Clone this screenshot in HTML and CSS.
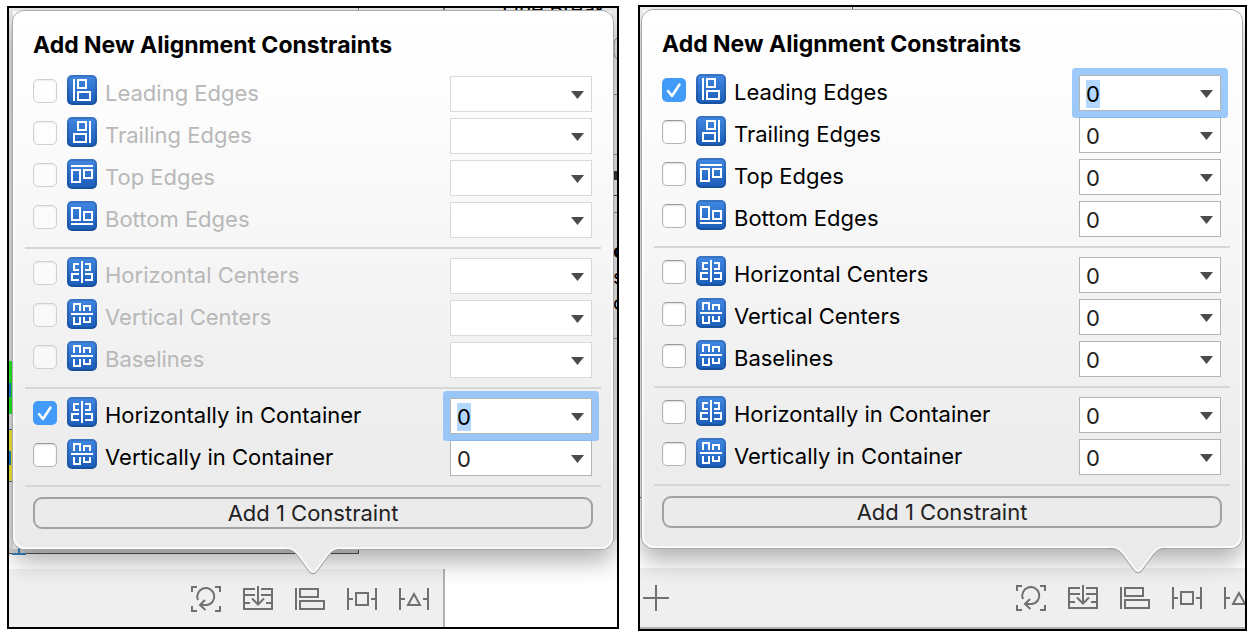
FILE: index.html
```html
<!DOCTYPE html>
<html lang="en">
<head>
<meta charset="utf-8">
<title>Add New Alignment Constraints</title>
<link rel="stylesheet" href="styles.css">
</head>
<body>
<svg class="defs" aria-hidden="true">
  <defs>
    <linearGradient id="blue" x1="0" y1="0" x2="0" y2="1"><stop offset="0" stop-color="#3f86e0"/><stop offset="1" stop-color="#1c5fba"/></linearGradient>
    <linearGradient id="rim" x1="0" y1="0" x2="0" y2="1"><stop offset="0" stop-color="#3a74c4"/><stop offset="1" stop-color="#174f9f"/></linearGradient>
    <symbol id="tile" viewBox="0 0 30 30"><rect width="30" height="30" rx="5" fill="url(#rim)"/><rect x="2" y="2" width="26" height="26" rx="3" fill="url(#blue)"/></symbol>
    <symbol id="leading" viewBox="0 0 30 30"><use href="#tile"/><path d="M7 4V26M11 5h8v8h-8zM11 17h12v8h-12z"/></symbol>
    <symbol id="trailing" viewBox="0 0 30 30"><use href="#tile"/><path d="M23 4V26M11 5h8v8h-8zM7 17h12v8h-12z"/></symbol>
    <symbol id="top" viewBox="0 0 30 30"><use href="#tile"/><path d="M4 7H26M5 11h8v12h-8zM17 11h8v8h-8z"/></symbol>
    <symbol id="bottom" viewBox="0 0 30 30"><use href="#tile"/><path d="M4 23H26M5 7h8v12h-8zM17 11h8v8h-8z"/></symbol>
    <symbol id="hcenter" viewBox="0 0 30 30"><use href="#tile"/><path d="M15 4V26M12 7H7V13H12M12 17H5V23H12M18 7H23V13H18M18 17H25V23H18"/></symbol>
    <symbol id="vcenter" viewBox="0 0 30 30"><use href="#tile"/><path d="M4 15H26M7 12V5H13V12M17 12V7H23V12M7 18V25H13V18M17 18V23H23V18"/></symbol>
    <symbol id="t-update" viewBox="0 0 30 26"><path d="M1 6V1H6M24 1H29V6M29 20V25H24M6 25H1V20M7 14A8.500 8.500 0 1 1 16 19H10M14 14L9 19L14.500 24"/></symbol>
    <symbol id="t-embed" viewBox="0 0 30 26"><path d="M12 3H1V23H29V3H18M1 9H12M18 9H29M1 17H7M23 17H29M15 0V18M9 12.500L15 18.500L21 12.500"/></symbol>
    <symbol id="t-align" viewBox="0 0 30 26"><path d="M1 2V24M5 3H23V11H5zM5 15H29V23H5z"/></symbol>
    <symbol id="t-pin" viewBox="0 0 30 26"><path d="M1 2V24M29 2V24M2 13H6M24 13H28M9 7H21V19H9z"/></symbol>
    <symbol id="t-resolve" viewBox="0 0 30 26"><path d="M1 2V24M29 2V24M2 13H6M24 13H28M15 8L9 19H21z"/></symbol>
    <symbol id="t-plus" viewBox="0 0 26 26"><path d="M13 0V26M0 13H26"/></symbol>
    <symbol id="tail" viewBox="0 0 56 30"><path class="tail-fill" d="M0 0V3C6 3 9 5 12 9L24 25Q28 30 32 25L44 9C47 5 50 3 56 3V0z"/><path class="tail-light" d="M0 2C7 2 10 4 13 8L25 24Q28 28 31 24L43 8C46 4 49 2 56 2"/><path class="tail-edge" d="M0 3.500C6 3.500 9 5 12 9L24 25.500Q28 30 32 25.500L44 9C47 5 50 3.500 56 3.500"/></symbol>
  </defs>
</svg>
<main class="screens">
  <section class="frame frame-left">
    <svg class="backdrop backdrop-start" width="440" height="619" aria-hidden="true">
      <path fill="#e4e4e4" d="M0 3H4V547H0z"/>
      <path fill="#e9e9e9" d="M0 0H440V3H0z"/>
      <path fill="#777" d="M349 0h1v3h-1zM434 0h2v3h-2z"/>
      <path fill="#28f028" d="M0 353H5V406H0z"/><path fill="#1b84d0" d="M0 375H2V389H0z"/>
      <path fill="#f5ec35" d="M0 422H5V474H0z"/><path fill="#4d67a3" d="M0 421h5v1H0zM0 473h5v1H0z"/><path fill="#1b84d0" d="M0 443h2v14H0z"/>
      <path fill="#d6d6d6" d="M0 541H350V546H0z"/>
      <path fill="#555" d="M0 546H350V541H349V545H0z"/>
      <path fill="#3c83bd" d="M9 540h2v5H9zM3 545h14v2H3z"/>
    </svg>
    <svg class="backdrop backdrop-end" width="172" height="619" aria-hidden="true">
      <path fill="#ececec" d="M166 3h6v530h-6z"/>
      <path fill="#e9e9e9" d="M0 0h172v3H0z"/>
      <text class="heading" x="57" y="8">Line Break</text>
      <path fill="#888" d="M168 86h4v1h-4zM168 146h4v1h-4zM168 204h4v1h-4zM168 330h4v1h-4z"/>
      <path fill="#333" d="M168 163h4v2h-4zM169 165h3v7h-3zM168 187h4v1h-4z"/>
      <path fill="none" stroke="#888" d="M172 30q-3 2-3 6v9q0 4 3 6"/>
      <text class="strong" x="168" y="250">o</text><text x="168" y="276">s</text><text x="168" y="302">c</text>
    </svg>
    <form class="popover popover-left">
      <h2>Add New Alignment Constraints</h2>
      <fieldset class="group">
        <div class="row off"><input type="checkbox" id="a1" disabled><svg class="glyph"><use href="#leading"/></svg><label for="a1">Leading Edges</label><span class="combo"><input type="text" aria-label="Leading Edges value" disabled><button type="button" aria-label="Show values" disabled></button></span></div>
        <div class="row off"><input type="checkbox" id="a2" disabled><svg class="glyph"><use href="#trailing"/></svg><label for="a2">Trailing Edges</label><span class="combo"><input type="text" aria-label="Trailing Edges value" disabled><button type="button" aria-label="Show values" disabled></button></span></div>
        <div class="row off"><input type="checkbox" id="a3" disabled><svg class="glyph"><use href="#top"/></svg><label for="a3">Top Edges</label><span class="combo"><input type="text" aria-label="Top Edges value" disabled><button type="button" aria-label="Show values" disabled></button></span></div>
        <div class="row off"><input type="checkbox" id="a4" disabled><svg class="glyph"><use href="#bottom"/></svg><label for="a4">Bottom Edges</label><span class="combo"><input type="text" aria-label="Bottom Edges value" disabled><button type="button" aria-label="Show values" disabled></button></span></div>
      </fieldset>
      <fieldset class="group">
        <div class="row off"><input type="checkbox" id="a5" disabled><svg class="glyph"><use href="#hcenter"/></svg><label for="a5">Horizontal Centers</label><span class="combo"><input type="text" aria-label="Horizontal Centers value" disabled><button type="button" aria-label="Show values" disabled></button></span></div>
        <div class="row off"><input type="checkbox" id="a6" disabled><svg class="glyph"><use href="#vcenter"/></svg><label for="a6">Vertical Centers</label><span class="combo"><input type="text" aria-label="Vertical Centers value" disabled><button type="button" aria-label="Show values" disabled></button></span></div>
        <div class="row off"><input type="checkbox" id="a7" disabled><svg class="glyph"><use href="#vcenter"/></svg><label for="a7">Baselines</label><span class="combo"><input type="text" aria-label="Baselines value" disabled><button type="button" aria-label="Show values" disabled></button></span></div>
      </fieldset>
      <fieldset class="group">
        <div class="row"><input type="checkbox" id="a8" checked><svg class="glyph"><use href="#hcenter"/></svg><label for="a8">Horizontally in Container</label><span class="combo active"><input type="text" aria-label="Horizontally in Container value" value="0"><button type="button" aria-label="Show values"></button></span></div>
        <div class="row"><input type="checkbox" id="a9"><svg class="glyph"><use href="#vcenter"/></svg><label for="a9">Vertically in Container</label><span class="combo"><input type="text" aria-label="Vertically in Container value" value="0"><button type="button" aria-label="Show values"></button></span></div>
      </fieldset>
      <div class="actions"><button class="add" type="button">Add 1 Constraint</button></div>
      <svg class="tail"><use href="#tail"/></svg>
    </form>
    <div class="bottom">
      <nav class="toolbar" aria-label="Layout tools">
        <button type="button" aria-label="Update frames"><svg><use href="#t-update"/></svg></button>
        <button type="button" aria-label="Embed in"><svg><use href="#t-embed"/></svg></button>
        <button type="button" aria-label="Align"><svg><use href="#t-align"/></svg></button>
        <button type="button" aria-label="Add constraints"><svg><use href="#t-pin"/></svg></button>
        <button type="button" aria-label="Resolve issues"><svg><use href="#t-resolve"/></svg></button>
      </nav>
      <div class="inspector"></div>
    </div>
  </section>
  <section class="frame frame-right">
    <svg class="backdrop backdrop-start" width="440" height="619" aria-hidden="true">
      <path fill="#f0f0f0" d="M0 0H440V3H0zM0 3H3V530H0z"/>
      <path fill="#555" d="M0 490H3V491H0zM212 0h1v3h-1z"/>
    </svg>
    <form class="popover popover-right">
      <h2>Add New Alignment Constraints</h2>
      <fieldset class="group">
        <div class="row"><input type="checkbox" id="b1" checked><svg class="glyph"><use href="#leading"/></svg><label for="b1">Leading Edges</label><span class="combo active"><input type="text" aria-label="Leading Edges value" value="0"><button type="button" aria-label="Show values"></button></span></div>
        <div class="row"><input type="checkbox" id="b2"><svg class="glyph"><use href="#trailing"/></svg><label for="b2">Trailing Edges</label><span class="combo"><input type="text" aria-label="Trailing Edges value" value="0"><button type="button" aria-label="Show values"></button></span></div>
        <div class="row"><input type="checkbox" id="b3"><svg class="glyph"><use href="#top"/></svg><label for="b3">Top Edges</label><span class="combo"><input type="text" aria-label="Top Edges value" value="0"><button type="button" aria-label="Show values"></button></span></div>
        <div class="row"><input type="checkbox" id="b4"><svg class="glyph"><use href="#bottom"/></svg><label for="b4">Bottom Edges</label><span class="combo"><input type="text" aria-label="Bottom Edges value" value="0"><button type="button" aria-label="Show values"></button></span></div>
      </fieldset>
      <fieldset class="group">
        <div class="row"><input type="checkbox" id="b5"><svg class="glyph"><use href="#hcenter"/></svg><label for="b5">Horizontal Centers</label><span class="combo"><input type="text" aria-label="Horizontal Centers value" value="0"><button type="button" aria-label="Show values"></button></span></div>
        <div class="row"><input type="checkbox" id="b6"><svg class="glyph"><use href="#vcenter"/></svg><label for="b6">Vertical Centers</label><span class="combo"><input type="text" aria-label="Vertical Centers value" value="0"><button type="button" aria-label="Show values"></button></span></div>
        <div class="row"><input type="checkbox" id="b7"><svg class="glyph"><use href="#vcenter"/></svg><label for="b7">Baselines</label><span class="combo"><input type="text" aria-label="Baselines value" value="0"><button type="button" aria-label="Show values"></button></span></div>
      </fieldset>
      <fieldset class="group">
        <div class="row"><input type="checkbox" id="b8"><svg class="glyph"><use href="#hcenter"/></svg><label for="b8">Horizontally in Container</label><span class="combo"><input type="text" aria-label="Horizontally in Container value" value="0"><button type="button" aria-label="Show values"></button></span></div>
        <div class="row"><input type="checkbox" id="b9"><svg class="glyph"><use href="#vcenter"/></svg><label for="b9">Vertically in Container</label><span class="combo"><input type="text" aria-label="Vertically in Container value" value="0"><button type="button" aria-label="Show values"></button></span></div>
      </fieldset>
      <div class="actions"><button class="add" type="button">Add 1 Constraint</button></div>
      <svg class="tail"><use href="#tail"/></svg>
    </form>
    <div class="bottom">
      <nav class="toolbar" aria-label="Layout tools">
        <button class="plus" type="button" aria-label="Add"><svg><use href="#t-plus"/></svg></button>
        <button type="button" aria-label="Update frames"><svg><use href="#t-update"/></svg></button>
        <button type="button" aria-label="Embed in"><svg><use href="#t-embed"/></svg></button>
        <button type="button" aria-label="Align"><svg><use href="#t-align"/></svg></button>
        <button type="button" aria-label="Add constraints"><svg><use href="#t-pin"/></svg></button>
        <button type="button" aria-label="Resolve issues"><svg><use href="#t-resolve"/></svg></button>
      </nav>
    </div>
  </section>
</main>
</body>
</html>
```
FILE: styles.css
```css
* { box-sizing: border-box; }

body {
  margin: 0;
  background: #fff;
  color: #000;
  font: 22px/36px Inter, "Noto Sans", sans-serif;
}

.defs { position: absolute; width: 0; height: 0; }

.screens {
  display: flex;
  align-items: flex-start;
  gap: 19px;
  padding: 5px 7px 0;
}

.frame {
  position: relative;
  border: 2px solid #000;
  background: #fff;
  overflow: hidden;
}
.frame-left { flex: 612 1 0; margin-top: 1px; }
.frame-right { flex: 609 1 0; }

.backdrop { position: absolute; top: 0; font-size: 20px; }
.backdrop .heading { font-size: 21px; }
.backdrop .strong { font-weight: 700; }
.backdrop-start { left: 0; }
.backdrop-end { right: 0; }

.popover {
  position: relative;
  z-index: 1;
  padding: 19px 12px 20px;
  border-radius: 12px;
  background: linear-gradient(#fff 0, #fcfcfc 20%, #ededed 80%, #eaeaea 100%);
  box-shadow: inset 0 0 0 2px rgba(255, 255, 255, .7), 0 0 0 1px #a9a9a9, 0 12px 24px rgba(0, 0, 0, .32);
}
.popover-left { margin: 3px 4px 20px; }
.popover-right { margin: 3px 3px 20px 2px; }

h2 {
  margin: 0 8px 15px;
  font-size: 23px;
  line-height: 30px;
  font-weight: 700;
}

.group {
  min-width: 0;
  margin: 0 0 8px;
  padding: 0 9px 4px 8px;
  border: 0;
  border-bottom: 2px solid #d6d6d6;
}

.row {
  display: grid;
  grid-template-columns: 24px 30px 1fr 142px;
  column-gap: 10px;
  align-items: start;
  height: 42px;
}
.row label { margin-left: -2px; white-space: nowrap; }
.off label { color: #b8b8b8; }

input[type="checkbox"] {
  appearance: none;
  width: 24px;
  height: 24px;
  margin: 4px 0 0;
  border: 1px solid #b4b4b4;
  border-top-color: #999;
  border-radius: 5px;
  background: #fff;
  box-shadow: inset 0 1px 2px rgba(0, 0, 0, .14);
}
input[type="checkbox"]:disabled { border-color: #d0d0d0; background: rgba(255, 255, 255, .5); box-shadow: inset 0 1px 2px rgba(0, 0, 0, .07); }
input[type="checkbox"]:checked {
  border: 0;
  box-shadow: none;
  background: #429bf9 url("data:image/svg+xml,%3Csvg xmlns='http://www.w3.org/2000/svg' width='24' height='24' fill='none' stroke='white' stroke-width='2.500' stroke-linecap='round' stroke-linejoin='round'%3E%3Cpath d='M6 13L10 18L17.500 6.500'/%3E%3C/svg%3E");
}

.glyph { width: 30px; height: 30px; fill: none; stroke: #fff; stroke-width: 2; }
#tile rect { stroke: none; }

.combo {
  display: flex;
  align-items: center;
  height: 36px;
  margin-top: 1px;
  padding: 2px 7px 0 0;
  border: 1px solid #b4b4b4;
  background: #fff;
}
.off .combo { border-color: #d9d9d9; }
.combo input {
  flex: 1;
  min-width: 0;
  height: 32px;
  padding: 0 0 0 6px;
  border: 0;
  outline: 0;
  background: none;
  color: #222;
  font: inherit;
}
.combo button {
  width: 13px;
  height: 8px;
  padding: 0;
  border: 0;
  background: #4c4a4c;
  clip-path: polygon(0 0, 100% 0, 50% 100%);
}
.combo.active {
  position: relative;
  z-index: 1;
  box-shadow: 0 0 0 7px rgba(125, 184, 250, .75);
  border-radius: 1px;
}
.combo.active input {
  color: #000;
  background: linear-gradient(#b3d7ff, #b3d7ff) 6px 2px / 14px 28px no-repeat;
}

.actions { padding: 2px 8px 0; }
.add {
  display: block;
  width: 100%;
  height: 32px;
  padding: 0;
  border: 2px solid #a2a2a2;
  border-radius: 9px;
  background: #ebebeb;
  color: #222;
  font: inherit;
  line-height: 28px;
}

.tail { position: absolute; top: calc(100% - 3px); width: 56px; height: 30px; fill: none; }
.popover-left .tail { left: 272px; }
.popover-right .tail { right: 76px; }
.tail-fill { fill: #eaeaea; }
.tail-light { stroke: #f8f8f8; stroke-width: 2; }
.tail-edge { stroke: #999; stroke-width: 1; }

.bottom { display: flex; height: 58px; }
.toolbar {
  display: flex;
  flex: 417 1 0;
  justify-content: flex-end;
  gap: 22px;
  padding: 17px 14px 0 3px;
  background: #efefef;
}
.inspector { flex: 172 1 0; border-left: 2px solid #b2b2b2; background: #fff; }
.frame-right .bottom { height: 61px; border-bottom: 2px solid #b2b2b2; }
.frame-right .toolbar { margin-right: -9px; padding-right: 0; }
.toolbar button { flex: none; width: 30px; height: 26px; padding: 0; border: 0; background: none; }
.toolbar .plus { width: 26px; margin-right: auto; }
.toolbar svg { display: block; width: 100%; height: 26px; fill: none; stroke: #707070; stroke-width: 2; }
```
